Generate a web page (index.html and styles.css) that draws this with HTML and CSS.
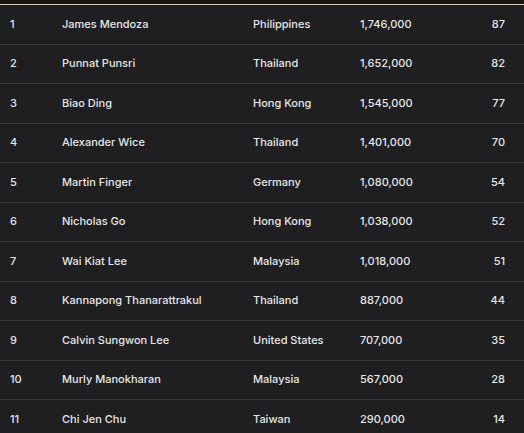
FILE: index.html
```html
<!DOCTYPE html>
<html>
<head>
<meta charset="utf-8">
<link rel="stylesheet" href="styles.css">
</head>
<body>
<div class="topband"></div>
<div class="table">
  <div class="row"><span>1</span><span>James Mendoza</span><span>Philippines</span><span>1,746,000</span><span class="num">87</span></div>
  <div class="row"><span>2</span><span>Punnat Punsri</span><span>Thailand</span><span>1,652,000</span><span class="num">82</span></div>
  <div class="row"><span>3</span><span>Biao Ding</span><span>Hong Kong</span><span>1,545,000</span><span class="num">77</span></div>
  <div class="row"><span>4</span><span>Alexander Wice</span><span>Thailand</span><span>1,401,000</span><span class="num">70</span></div>
  <div class="row"><span>5</span><span>Martin Finger</span><span>Germany</span><span>1,080,000</span><span class="num">54</span></div>
  <div class="row"><span>6</span><span>Nicholas Go</span><span>Hong Kong</span><span>1,038,000</span><span class="num">52</span></div>
  <div class="row"><span>7</span><span>Wai Kiat Lee</span><span>Malaysia</span><span>1,018,000</span><span class="num">51</span></div>
  <div class="row"><span>8</span><span>Kannapong Thanarattrakul</span><span>Thailand</span><span>887,000</span><span class="num">44</span></div>
  <div class="row"><span>9</span><span>Calvin Sungwon Lee</span><span>United States</span><span>707,000</span><span class="num">35</span></div>
  <div class="row"><span>10</span><span>Murly Manokharan</span><span>Malaysia</span><span>567,000</span><span class="num">28</span></div>
  <div class="row"><span>11</span><span>Chi Jen Chu</span><span>Taiwan</span><span>290,000</span><span class="num">14</span></div>
</div>
</body>
</html>
```
FILE: styles.css
```css
html, body {
  margin: 0;
  padding: 0;
  background: #1f1f21;
  overflow: hidden;
}
body {
  font-family: Inter, "Liberation Sans", sans-serif;
  font-size: 11px;
  font-weight: 500;
  color: #e6e6e8;
}
.topband {
  height: 4px;
  background: #1b1512;
  border-bottom: 1px solid #d9cbbd;
}
.table {
  display: flex;
  flex-direction: column;
}
.row {
  display: grid;
  grid-template-columns: 52px 191px 107px 1fr 60px;
  align-items: center;
  height: 38.5px;
  padding: 0 19px 0 10px;
  border-bottom: 1px solid #3a3a3d;
}
.row span {
  padding-bottom: 1px;
}
.num {
  text-align: right;
}
```
